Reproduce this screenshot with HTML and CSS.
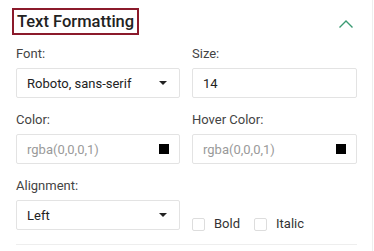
FILE: index.html
```html
<!DOCTYPE html>
<html lang="en">
<head>
    <meta charset="UTF-8">
    <meta name="viewport" content="width=device-width, initial-scale=1.0">
    <title>Text Formatting</title>
    <link rel="stylesheet" href="styles.css">
</head>
<body>

<div class="panel">
    <div class="panel-header">
        <h2 class="panel-title">Text Formatting</h2>
        <button class="collapse-btn" aria-label="Collapse">
            <svg width="16" height="10" viewBox="0 0 16 10">
                <path d="M1.5 8.5 L8 2 L14.5 8.5" fill="none" stroke="#3a9a72" stroke-width="1.4"/>
            </svg>
        </button>
    </div>

    <div class="grid">
        <div class="field">
            <label>Font:</label>
            <div class="box select">
                <span>Roboto, sans-serif</span>
                <span class="caret"></span>
            </div>
        </div>
        <div class="field">
            <label>Size:</label>
            <div class="box"><span>14</span></div>
        </div>

        <div class="field">
            <label>Color:</label>
            <div class="box">
                <span class="placeholder">rgba(0,0,0,1)</span>
                <span class="swatch"></span>
            </div>
        </div>
        <div class="field">
            <label>Hover Color:</label>
            <div class="box">
                <span class="placeholder">rgba(0,0,0,1)</span>
                <span class="swatch"></span>
            </div>
        </div>

        <div class="field">
            <label>Alignment:</label>
            <div class="box select">
                <span>Left</span>
                <span class="caret"></span>
            </div>
        </div>
        <div class="checks">
            <label class="check"><span class="checkbox"></span>Bold</label>
            <label class="check"><span class="checkbox"></span>Italic</label>
        </div>
    </div>
</div>

</body>
</html>
```

FILE: styles.css
```css
body {
    margin: 0;
    padding: 0;
    background: white;
    font-family: Roboto, "Liberation Sans", sans-serif;
    color: #222;
}
.panel {
    width: 372px;
    height: 251px;
    border-right: 1px solid #eee;
    box-sizing: content-box;
}
.panel-header {
    display: flex;
    justify-content: space-between;
    align-items: center;
    padding: 8px 18px 0 12px;
}
.panel-title {
    margin: 0;
    font-size: 16.5px;
    font-weight: 500;
    line-height: 23px;
    padding: 0 3px;
    border: 2px solid #8b1a2b;
    color: #222;
}
.collapse-btn {
    background: none;
    border: none;
    padding: 0;
    margin-top: 4px;
    display: flex;
    cursor: pointer;
}
.grid {
    display: grid;
    grid-template-columns: 164px 165px;
    column-gap: 12px;
    row-gap: 14px;
    margin: 11px 15px 0 16px;
    padding-bottom: 14px;
    border-bottom: 1px solid #eee;
}
.field label {
    display: block;
    font-size: 13px;
    line-height: 16px;
    color: #444;
    margin-bottom: 6px;
}
.box {
    display: flex;
    justify-content: space-between;
    align-items: center;
    height: 30px;
    box-sizing: border-box;
    padding: 0 10px;
    border: 1px solid #e3e3e3;
    border-radius: 2px;
    font-size: 13px;
    color: #222;
}
.placeholder {
    color: #9a9a9a;
}
.swatch {
    width: 10px;
    height: 10px;
    background: black;
}
.caret {
    width: 0;
    height: 0;
    margin-right: 2px;
    border-left: 4px solid transparent;
    border-right: 4px solid transparent;
    border-top: 4px solid #222;
}
.checks {
    display: flex;
    align-items: flex-end;
    gap: 14px;
}
.check {
    display: flex;
    align-items: center;
    font-size: 13px;
    color: #333;
    line-height: 16px;
    margin-bottom: -2px;
}
.checkbox {
    width: 11px;
    height: 11px;
    border: 1px solid #ddd;
    border-radius: 2px;
    margin-right: 9px;
}
```
